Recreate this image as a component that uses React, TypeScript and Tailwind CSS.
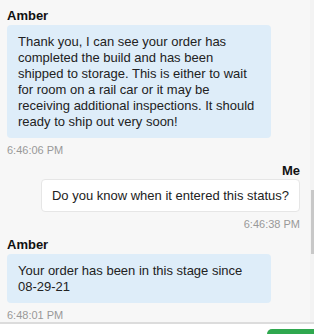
import React from 'react'

interface Message {
  from: 'agent' | 'me'
  name: string
  text: string
  time: string
}

const MESSAGES: Message[] = [
  {
    from: 'agent',
    name: 'Amber',
    text: 'Thank you, I can see your order has completed the build and has been shipped to storage. This is either to wait for room on a rail car or it may be receiving additional inspections. It should ready to ship out very soon!',
    time: '6:46:06 PM',
  },
  {
    from: 'me',
    name: 'Me',
    text: 'Do you know when it entered this status?',
    time: '6:46:38 PM',
  },
  {
    from: 'agent',
    name: 'Amber',
    text: 'Your order has been in this stage since 08-29-21',
    time: '6:48:01 PM',
  },
]

function Bubble({ msg }: { msg: Message }) {
  if (msg.from === 'me') {
    return (
      <div className="flex flex-col items-end pr-[14px]">
        <p className="text-[13px] font-bold leading-[15px] text-[#111]">{msg.name}</p>
        <div className="mt-[1px] bg-white border border-[#e6e6e6] rounded-[4px] px-[10px] pt-[8px] pb-[7px] text-[13px] leading-[16px] text-[#222]">
          {msg.text}
        </div>
        <p className="mt-[5px] text-[11px] leading-[14px] text-[#999]">{msg.time}</p>
      </div>
    )
  }
  return (
    <div className="flex flex-col items-start pl-[7px]">
      <p className="text-[13px] font-bold leading-[15px] text-[#111]">{msg.name}</p>
      <div className="mt-[2px] w-[264px] bg-[#deedf9] rounded-[4px] px-[11px] pt-[9px] pb-[8px] text-[13px] leading-[16px] text-[#222]">
        {msg.text}
      </div>
      <p className="mt-[5px] text-[11px] leading-[14px] text-[#999]">{msg.time}</p>
    </div>
  )
}

export default function App() {
  return (
    <div className="h-[334px] w-[314px] flex flex-col bg-white overflow-hidden" style={{ fontFamily: '"Liberation Sans", Arial, sans-serif' }}>
      <div className="relative h-[322px] bg-[#f7f7f7] overflow-hidden">
        <div className="flex flex-col gap-[6px] pt-[8px]">
          {MESSAGES.map((m, i) => (
            <Bubble key={i} msg={m} />
          ))}
        </div>
        <div className="absolute right-0 top-0 bottom-0 w-[4px] bg-[#f3f3f3]">
          <div className="mt-[190px] h-[64px] w-[3px] ml-[1px] bg-[#c8c8c8]" />
        </div>
      </div>
      <div className="h-[2px] bg-[#dcdcdc]" />
      <div className="flex-1 flex justify-end items-end">
        <div className="w-[47px] h-[5px] bg-[#2fa84f] rounded-tl-[5px]" />
      </div>
    </div>
  )
}
